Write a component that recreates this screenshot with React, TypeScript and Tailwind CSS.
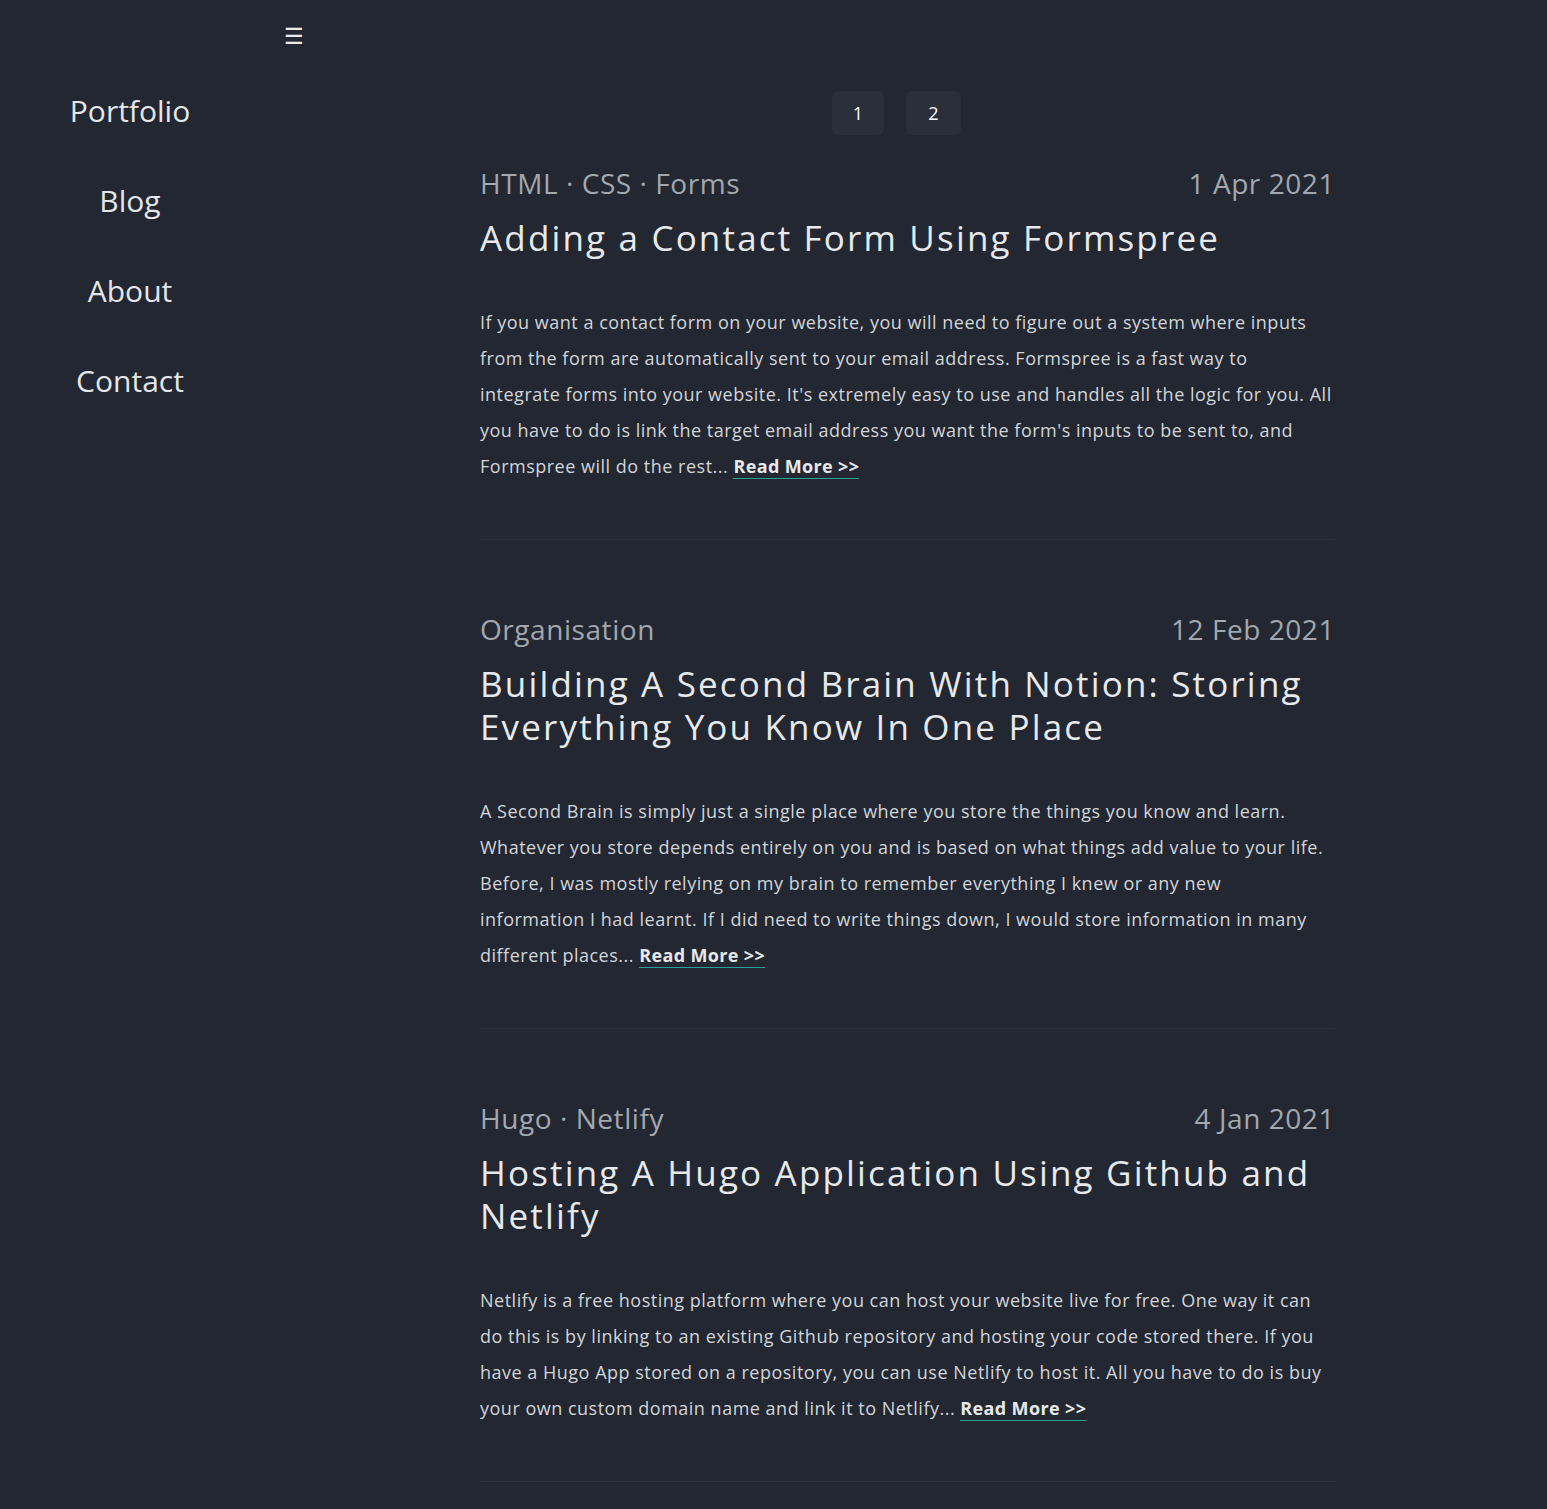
import { Fragment } from "react";

const posts = [
  {
    tags: "HTML · CSS · Forms",
    date: "1 Apr 2021",
    title: "Adding a Contact Form Using Formspree",
    lines: [
      "If you want a contact form on your website, you will need to figure out a system where inputs",
      "from the form are automatically sent to your email address. Formspree is a fast way to",
      "integrate forms into your website. It's extremely easy to use and handles all the logic for you. All",
      "you have to do is link the target email address you want the form's inputs to be sent to, and",
      "Formspree will do the rest...",
    ],
  },
  {
    tags: "Organisation",
    date: "12 Feb 2021",
    title: "Building A Second Brain With Notion: Storing Everything You Know In One Place",
    lines: [
      "A Second Brain is simply just a single place where you store the things you know and learn.",
      "Whatever you store depends entirely on you and is based on what things add value to your life.",
      "Before, I was mostly relying on my brain to remember everything I knew or any new",
      "information I had learnt. If I did need to write things down, I would store information in many",
      "different places...",
    ],
  },
  {
    tags: "Hugo · Netlify",
    date: "4 Jan 2021",
    title: "Hosting A Hugo Application Using Github and Netlify",
    lines: [
      "Netlify is a free hosting platform where you can host your website live for free. One way it can",
      "do this is by linking to an existing Github repository and hosting your code stored there. If you",
      "have a Hugo App stored on a repository, you can use Netlify to host it. All you have to do is buy",
      "your own custom domain name and link it to Netlify...",
    ],
  },
];

const navItems = ["Portfolio", "Blog", "About", "Contact"];

export default function App() {
  return (
    <div
      className="min-h-[1509px] bg-[#222731] text-[#e4e6ea] flex"
      style={{ fontFamily: '"Open Sans", "Noto Sans", sans-serif' }}
    >
      <aside className="w-[260px] shrink-0 pt-[93px]">
        <nav className="flex flex-col items-center gap-[54px]">
          {navItems.map((item) => (
            <a key={item} href="#" className="text-[30px] leading-[36px] text-[#e4e6ea]">
              {item}
            </a>
          ))}
        </nav>
      </aside>

      <main className="flex-1">
        <div className="h-[72px] pl-[24px] flex items-center">
          <button className="text-[22px] leading-none text-[#e8eaee] -mt-[2px]">☰</button>
        </div>

        <div className="ml-[220px] w-[855px]">
          <div className="flex justify-center gap-[22px] pr-[22px] mt-[19px]">
            <button className="w-[52px] h-[44px] rounded-md bg-[#2a2f3a] text-[18px] text-white">1</button>
            <button className="w-[55px] h-[44px] rounded-md bg-[#2a2f3a] text-[18px] text-white">2</button>
          </div>

          {posts.map((p) => (
            <article key={p.title} className="border-b border-[#2d323d] pt-[30px] pb-[55px] mb-[41px] last:mb-0">
              <div className="flex justify-between text-[28px] leading-[36px] tracking-[0.02em] text-[#a3a7ae]">
                <span>{p.tags}</span>
                <span>{p.date}</span>
              </div>
              <h2 className="mt-[15px] text-[35px] leading-[43px] tracking-[0.062em] text-[#e7e9ec]">{p.title}</h2>
              <p className="mt-[45px] text-[18px] leading-[36px] tracking-[0.028em] text-[#d2d5da]">
                {p.lines.map((line, i) => (
                  <Fragment key={i}>
                    {line}
                    {i < p.lines.length - 1 && <br />}
                  </Fragment>
                ))}{" "}
                <a href="#" className="font-bold text-[#e7e9ec] border-b border-[#2aa198] tracking-[0.02em]">
                  Read More &gt;&gt;
                </a>
              </p>
            </article>
          ))}
        </div>
      </main>
    </div>
  );
}
